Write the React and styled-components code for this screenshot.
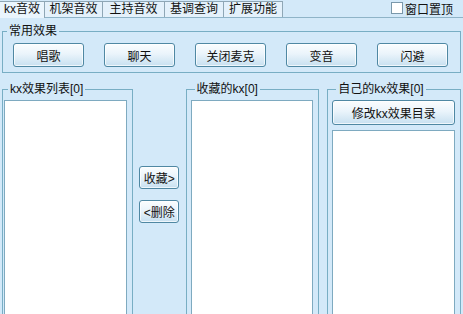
import styled, { createGlobalStyle, css } from "styled-components";

const Global = createGlobalStyle`
  html, body {
    margin: 0;
    padding: 0;
    background: #d3e9f9;
    font-family: "Liberation Sans", "Noto Sans CJK SC", sans-serif;
    font-size: 12px;
    color: #111;
  }
`;

const Page = styled.div`
  width: 463px;
  height: 314px;
  overflow: hidden;
  background: #d3e9f9;
`;

const TabBar = styled.div`
  display: flex;
  align-items: flex-end;
  height: 17px;
  border-bottom: 1px solid #8fb4c8;
  background: #d3e9f9;
`;

const Tab = styled.div`
  width: ${(p) => p.w}px;
  height: 16px;
  line-height: 15px;
  box-sizing: border-box;
  text-align: center;
  border: 1px solid #8fa7b6;
  border-bottom: none;
  border-left: none;
  background: #e4f1fb;
  font-size: 12px;
  white-space: nowrap;
  ${(p) =>
    p.active &&
    css`
      height: 17px;
      margin-bottom: -1px;
      background: #eaf5fd;
    `}
`;

const Spacer = styled.div`
  flex: 1;
`;

const TopCheck = styled.label`
  display: flex;
  align-items: center;
  gap: 2px;
  height: 16px;
  margin-right: 10px;
  align-self: flex-start;
  font-size: 12px;
`;

const Box = styled.span`
  width: 10px;
  height: 10px;
  border: 1px solid #7a98ab;
  background: #fff;
`;

const Body = styled.div`
  padding: 6px 2px 0 2px;
`;

const Group = styled.fieldset`
  margin: 0;
  padding: ${(p) => p.pad || "0"};
  border: 1px solid #78aec4;
  box-sizing: border-box;
  width: ${(p) => p.w}px;
  height: ${(p) => p.h}px;
  display: flex;
  flex-direction: column;
  min-width: 0;
`;

const Legend = styled.legend`
  padding: 0 2px;
  margin-left: 4px;
  font-size: 12px;
  line-height: 14px;
`;

const ButtonRow = styled.div`
  display: flex;
  gap: 20px;
  padding: 5px 0 0 10px;
`;

const Btn = styled.button`
  width: ${(p) => p.w || 70}px;
  height: ${(p) => p.h || 24}px;
  padding: 0;
  border: 1px solid #4f88a3;
  border-radius: 3px;
  background: linear-gradient(#fbfdfe 0%, #eaf4fb 45%, #c7e0f0 100%);
  font-family: "Liberation Sans", "Noto Sans CJK SC", sans-serif;
  font-size: 12px;
  color: #111;
  box-shadow: inset 0 0 0 1px rgba(255, 255, 255, 0.7);
`;

const Lower = styled.div`
  display: flex;
  margin-top: 9px;
`;

const List = styled.div`
  flex: 1;
  background: #fff;
  border: 1px solid #7eaac0;
  border-bottom: none;
  margin-top: ${(p) => p.mt || 4}px;
`;

const Middle = styled.div`
  width: 53px;
  display: flex;
  flex-direction: column;
  align-items: center;
  gap: 11px;
  padding-top: 84px;
`;

const Gap = styled.div`
  width: 8px;
`;

const tabs = [
  ["kx音效", 45],
  ["机架音效", 58],
  ["主持音效", 62],
  ["基调查询", 59],
  ["扩展功能", 59],
];

const common = ["唱歌", "聊天", "关闭麦克", "变音", "闪避"];

export default function App() {
  return (
    <Page>
      <Global />
      <TabBar>
        {tabs.map(([t, w], i) => (
          <Tab key={t} w={w} active={i === 0}>
            {t}
          </Tab>
        ))}
        <Spacer />
        <TopCheck>
          <Box />
          窗口置顶
        </TopCheck>
      </TabBar>
      <Body>
        <Group w={459} h={49}>
          <Legend>常用效果</Legend>
          <ButtonRow>
            {common.map((c) => (
              <Btn key={c} w={71}>
                {c}
              </Btn>
            ))}
          </ButtonRow>
        </Group>
        <Lower>
          <Group w={131} h={240} pad="0 5px 0 1px">
            <Legend>kx效果列表[0]</Legend>
            <List />
          </Group>
          <Middle>
            <Btn w={40} h={23}>收藏&gt;</Btn>
            <Btn w={40} h={23}>&lt;删除</Btn>
          </Middle>
          <Group w={134} h={240} pad="0 5px 0 4px">
            <Legend>收藏的kx[0]</Legend>
            <List />
          </Group>
          <Gap />
          <Group w={134} h={240} pad="0 5px 0 4px">
            <Legend>自己的kx效果[0]</Legend>
            <Btn w={123} h={25} style={{ marginTop: 4 }}>
              修改kx效果目录
            </Btn>
            <List mt={5} />
          </Group>
        </Lower>
      </Body>
    </Page>
  );
}
